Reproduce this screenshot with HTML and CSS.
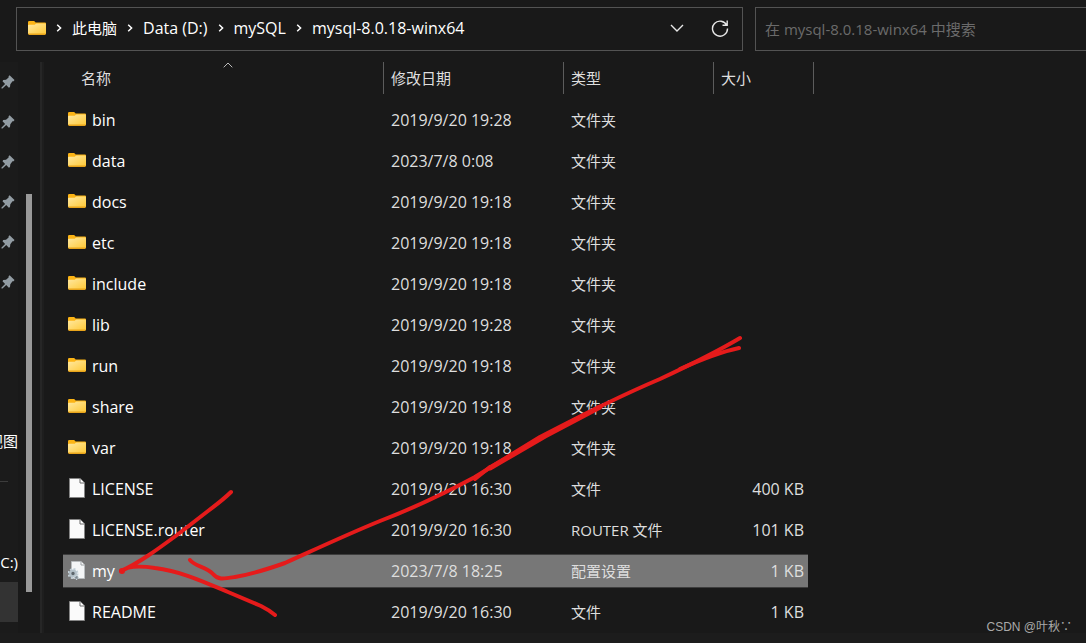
FILE: index.html
```
<!DOCTYPE html>
<html lang="zh-CN">
<head>
<meta charset="utf-8">
<title>mysql-8.0.18-winx64</title>
<link rel="stylesheet" href="styles.css">
</head>
<body>
<svg class="defs" aria-hidden="true">
  <defs>
    <linearGradient id="fg" x1="0" y1="0" x2="1" y2="1"><stop offset="0" stop-color="#ffe9a2"/><stop offset="1" stop-color="#ffc937"/></linearGradient>
    <symbol id="folder" viewBox="0 0 18 14">
      <path d="M0 1.2Q0 0 1.2 0H5.8Q6.6 0 7 .7L7.6 1.5H17Q18 1.5 18 2.5V6H0Z" fill="#fcb415"/>
      <path d="M0 4.4Q0 3.8.8 3.8H6Q6.8 3.8 7.3 3.2T8.6 2.6H17.2Q18 2.6 18 3.4V13H0Z" fill="url(#fg)"/>
      <path d="M0 12.6H18Q18 14 16.8 14H1.2Q0 14 0 12.6Z" fill="#e8a41b"/>
    </symbol>
    <symbol id="file" viewBox="0 0 16 20">
      <path d="M.5.5H11L15.5 5V19.500H.5Z" fill="#fafafa" stroke="#858585"/>
      <path d="M11 .5V5H15.500" fill="#fff" stroke="#6b6b6b"/>
    </symbol>
    <symbol id="config" viewBox="0 0 18 20">
      <path d="M3.500 1.500H13L16.500 5V18.500H3.500Z" fill="#f4f6f7" stroke="#b9bdbf"/>
      <path d="M13 1.500V5H16.500" fill="#fff" stroke="#9a9fa2"/>
      <circle cx="5" cy="13.500" r="4.500" fill="none" stroke="#c3d0d8" stroke-width="2" stroke-dasharray="2 1.530"/>
      <circle cx="5" cy="13.500" r="2.800" fill="#5d666c" stroke="#b4c1c9" stroke-width="2.200"/>
      <circle cx="8.500" cy="17.500" r="1.800" fill="#7d8890" stroke="#cbd6dc" stroke-width="1.200" stroke-dasharray="1.200 .7"/>
    </symbol>
    <symbol id="pin" viewBox="0 0 14 14">
      <path d="M8.600.3 13.500 4.900 12.600 6.200 11.500 6.300 9.300 9.200 9 12 7.900 12.700 5.200 10 1.500 13.400.5 13.400.5 12.500 4.100 8.900 1.500 6.200 2.200 5.100 5 4.700 7.600 2.500 7.600 1.200Z" fill="#929ca3"/>
    </symbol>
    <symbol id="chevron" viewBox="0 0 6 8"><path d="M1.200.8 4.600 4 1.200 7.200" fill="none" stroke="#fff" stroke-width="1.500"/></symbol>
  </defs>
</svg>

<header class="toolbar">
  <nav class="address" aria-label="地址">
    <svg class="folder"><use href="#folder"/></svg>
    <svg class="chev"><use href="#chevron"/></svg>
    <a class="cjk" href="#">此电脑</a>
    <svg class="chev"><use href="#chevron"/></svg>
    <a href="#">Data (D:)</a>
    <svg class="chev"><use href="#chevron"/></svg>
    <a href="#">mySQL</a>
    <svg class="chev"><use href="#chevron"/></svg>
    <a href="#">mysql-8.0.18-winx64</a>
    <span class="address-actions">
      <button type="button" aria-label="历史记录"><svg width="14" height="8" viewBox="0 0 14 8"><path d="M1 1 7 7 13 1" fill="none" stroke="#e8e8e8" stroke-width="1.400"/></svg></button>
      <button type="button" aria-label="刷新"><svg width="18" height="18" viewBox="0 0 18 18"><path d="M15.800 6.500A7.500 7.500 0 1 0 16.500 9.500M16.200 1.500V6.300H11.500" fill="none" stroke="#e8e8e8" stroke-width="1.400"/></svg></button>
    </span>
  </nav>
  <input class="search" type="search" aria-label="搜索" placeholder="在 mysql-8.0.18-winx64 中搜索">
</header>

<div class="content">
  <aside class="sidebar">
    <div class="tree">
      <button class="node" type="button" aria-label="固定 1"><svg class="pin"><use href="#pin"/></svg></button>
      <button class="node" type="button" aria-label="固定 2"><svg class="pin"><use href="#pin"/></svg></button>
      <button class="node" type="button" aria-label="固定 3"><svg class="pin"><use href="#pin"/></svg></button>
      <button class="node" type="button" aria-label="固定 4"><svg class="pin"><use href="#pin"/></svg></button>
      <button class="node" type="button" aria-label="固定 5"><svg class="pin"><use href="#pin"/></svg></button>
      <button class="node" type="button" aria-label="固定 6"><svg class="pin"><use href="#pin"/></svg></button>
      <a class="node label view" href="#">视图</a>
      <hr>
      <a class="node label drive" href="#">C:)</a>
      <a class="node current" href="#" aria-label="Data (D:)"></a>
    </div>
    <div class="scroll"><div class="thumb"></div></div>
  </aside>

  <main class="files">
    <table>
      <colgroup><col class="c-name"><col class="c-date"><col class="c-type"><col class="c-size"></colgroup>
      <thead>
        <tr>
          <th><button type="button">名称</button><svg class="sort" viewBox="0 0 10 6"><path d="M.7 5.300 5 1 9.300 5.300" fill="none" stroke="#bbb"/></svg></th>
          <th><button type="button">修改日期</button></th>
          <th><button type="button">类型</button></th>
          <th><button type="button">大小</button></th>
        </tr>
      </thead>
      <tbody>
        <tr><td><span class="entry"><svg class="folder"><use href="#folder"/></svg>bin</span></td><td>2019/9/20 19:28</td><td>文件夹</td><td></td></tr>
        <tr><td><span class="entry"><svg class="folder"><use href="#folder"/></svg>data</span></td><td>2023/7/8 0:08</td><td>文件夹</td><td></td></tr>
        <tr><td><span class="entry"><svg class="folder"><use href="#folder"/></svg>docs</span></td><td>2019/9/20 19:18</td><td>文件夹</td><td></td></tr>
        <tr><td><span class="entry"><svg class="folder"><use href="#folder"/></svg>etc</span></td><td>2019/9/20 19:18</td><td>文件夹</td><td></td></tr>
        <tr><td><span class="entry"><svg class="folder"><use href="#folder"/></svg>include</span></td><td>2019/9/20 19:18</td><td>文件夹</td><td></td></tr>
        <tr><td><span class="entry"><svg class="folder"><use href="#folder"/></svg>lib</span></td><td>2019/9/20 19:28</td><td>文件夹</td><td></td></tr>
        <tr><td><span class="entry"><svg class="folder"><use href="#folder"/></svg>run</span></td><td>2019/9/20 19:18</td><td>文件夹</td><td></td></tr>
        <tr><td><span class="entry"><svg class="folder"><use href="#folder"/></svg>share</span></td><td>2019/9/20 19:18</td><td>文件夹</td><td></td></tr>
        <tr><td><span class="entry"><svg class="folder"><use href="#folder"/></svg>var</span></td><td>2019/9/20 19:18</td><td>文件夹</td><td></td></tr>
        <tr><td><span class="entry"><svg class="file"><use href="#file"/></svg>LICENSE</span></td><td>2019/9/20 16:30</td><td>文件</td><td>400 KB</td></tr>
        <tr><td><span class="entry"><svg class="file"><use href="#file"/></svg>LICENSE.router</span></td><td>2019/9/20 16:30</td><td>ROUTER 文件</td><td>101 KB</td></tr>
        <tr class="selected"><td><span class="entry"><svg class="config"><use href="#config"/></svg>my</span></td><td>2023/7/8 18:25</td><td>配置设置</td><td>1 KB</td></tr>
        <tr><td><span class="entry"><svg class="file"><use href="#file"/></svg>README</span></td><td>2019/9/20 16:30</td><td>文件</td><td>1 KB</td></tr>
      </tbody>
    </table>
  </main>
</div>

<footer class="status"><span>个项目</span><span>选中 1</span></footer>

<svg class="ink" width="1086" height="643" viewBox="0 0 1086 643" aria-hidden="true">
  <path d="M231 492C224 499 216 505 208 511L177 535C158 549 139 563 121 571C129 565 142 566 155 568C180 571 202 581 228 592L261 606Q269 610 275 615"/>
  <path d="M190 560C194 566 207 567 213 574C218 580 223 579 235 577C253 574 268 569 285 563C316 549 348 534 380 521C414 508 447 492 475 477L540 437C580 416 620 396 660 379C690 365 715 353 740 338"/>
  <path d="M739 348C720 352 700 360 680 369M475 479 490 467"/>
  <path class="thick" d="M490 468 545 436 600 407"/>
  <circle cx="122" cy="571" r="1"/>
</svg>
<div class="watermark">CSDN @叶秋∵</div>
</body>
</html>
```
FILE: styles.css
```
* { box-sizing: border-box; }

body {
  margin: 0;
  height: 100vh;
  overflow: hidden;
  position: relative;
  display: flex;
  flex-direction: column;
  background: #191919;
  color: #fff;
  font: 16px/24px "Open Sans", "Noto Sans CJK SC", sans-serif;
}

button {
  padding: 0;
  border: 0;
  background: none;
  color: inherit;
  font: inherit;
}

a { color: inherit; text-decoration: none; }
svg { display: block; flex: none; }
.defs { position: absolute; width: 0; height: 0; }
.folder { width: 18px; height: 14px; }
.file { width: 16px; height: 20px; margin: 0 1px; }
.config { width: 18px; height: 20px; }
.pin { width: 14px; height: 14px; }

.toolbar {
  display: flex;
  flex: none;
  gap: 12px;
  padding: 7px 0 11px 16px;
}

.address {
  flex: 0 0 727px;
  height: 44px;
  display: flex;
  align-items: center;
  padding: 0 13px 2px 11px;
  border: 1px solid #535353;
}

.chev { width: 6px; height: 8px; margin: 0 10px; }
.cjk { font-size: 15px; }

.address-actions {
  display: flex;
  align-items: center;
  gap: 27px;
  margin-left: auto;
}

.search {
  flex: 1;
  min-width: 0;
  height: 44px;
  padding: 0 9px;
  border: 1px solid #535353;
  border-right: 0;
  border-radius: 0;
  background: none;
  color: #fff;
  font: inherit;
  font-size: 15px;
}
.search::placeholder { color: #6b6b6b; opacity: 1; }

.content { display: flex; flex: none; }

.sidebar {
  display: flex;
  flex: 0 0 44px;
  border-right: 2px solid #1e1e1e;
  box-shadow: inset -2px 0 #262626;
}

.tree { width: 18px; overflow: hidden; background: #1b1b1b; }
.node {
  width: 100%;
  height: 40px;
  display: flex;
  align-items: center;
}
.node .pin { margin-left: 1px; }
.label { justify-content: flex-end; font-size: 15px; white-space: nowrap; }
.view { margin-top: 119px; }
.drive { margin-top: 60px; }
.current { background: #333; }
.tree hr { width: 8px; margin: 20px 0 0; border: 0; border-top: 1px solid #3c3c3c; }

.scroll { padding: 132px 8px 41px; display: flex; }
.thumb { width: 6px; background: #999; }

.files { flex: 1; padding-left: 19px; }

table { border-spacing: 0; table-layout: fixed; width: 751px; }
.c-name { width: 321px; }
.c-date { width: 180px; }
.c-type { width: 150px; }
.c-size { width: 100px; }

th {
  position: relative;
  height: 38px;
  padding: 0 7px;
  border-bottom: 6px solid transparent;
  background: linear-gradient(#5c5c5c, #5c5c5c) right / 1px 100% no-repeat padding-box;
  text-align: left;
  font-size: 15px;
  font-weight: 400;
  color: #dedede;
}
th button { display: block; padding-bottom: 1px; }
th:first-child { padding-left: 18px; }
.sort { position: absolute; top: 0; left: 160px; width: 10px; height: 6px; }

td {
  height: 41px;
  padding: 0 7px;
  border-top: 3px solid transparent;
  border-bottom: 4px solid transparent;
  background-clip: padding-box;
  color: #dedede;
  white-space: nowrap;
}
td:first-child { padding-left: 5px; color: #fff; }
td:nth-child(3) { font-size: 15px; }
td:last-child {
  padding-right: 4px;
  border-right: 6px solid transparent;
  text-align: right;
}
.entry { display: flex; align-items: center; gap: 6px; }
.entry svg { margin-bottom: 2px; }
.selected td { background-color: #777; box-shadow: inset 0 1px #3d3d3d, inset 0 -1px #3d3d3d; }

.status {
  display: flex;
  flex: none;
  gap: 43px;
  padding-top: 5px;
  background: #1c1c1c;
  font-size: 15px;
}

.ink {
  position: absolute;
  top: 0;
  left: 0;
  pointer-events: none;
  fill: none;
  stroke: #e51b1b;
  stroke-width: 4;
  stroke-linecap: round;
  stroke-linejoin: round;
}
.ink .thick { stroke-width: 5; }

.watermark {
  position: absolute;
  right: 14px;
  bottom: 7px;
  color: #aaa;
  font: 12px/18px "Liberation Sans", "Noto Sans CJK SC", sans-serif;
}
```
